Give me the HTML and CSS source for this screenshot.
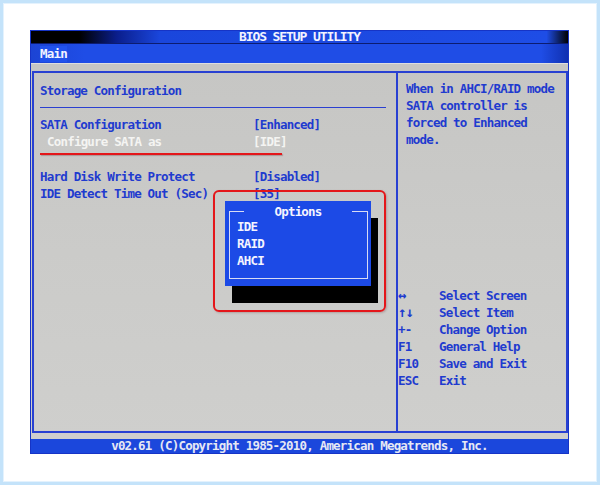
FILE: index.html
```html
<!DOCTYPE html>
<html lang="en">
<head>
<meta charset="utf-8">
<title>BIOS Setup Utility</title>
<link rel="stylesheet" href="styles.css">
</head>
<body>
<div class="frame">
  <div class="screen">
    <div class="titlebar">BIOS SETUP UTILITY</div>
    <div class="menubar"><span class="tab">Main</span></div>
    <div class="desk">
      <div class="panel">
        <div class="left">
          <div class="heading">Storage Configuration</div>
          <div class="rule"></div>
          <div class="items">
            <span class="label">SATA Configuration</span><span class="value">[Enhanced]</span>
            <span class="label sub sel">Configure SATA as</span><span class="value sel">[IDE]</span>
            <span class="label blank">&nbsp;</span><span class="value"></span>
            <span class="label">Hard Disk Write Protect</span><span class="value">[Disabled]</span>
            <span class="label">IDE Detect Time Out (Sec)</span><span class="value">[35]</span>
          </div>
          <div class="underline"></div>
          <div class="popup">
            <div class="popup-frame"></div>
            <div class="popup-title">Options</div>
            <ul class="popup-list">
              <li>IDE</li>
              <li>RAID</li>
              <li>AHCI</li>
            </ul>
          </div>
          <div class="mark"></div>
        </div>
        <div class="right">
          <div class="help">When in AHCI/RAID mode<br>SATA controller is<br>forced to Enhanced<br>mode.</div>
          <div class="keys">
            <span class="key arrow">↔</span><span>Select Screen</span>
            <span class="key arrow">↑↓</span><span>Select Item</span>
            <span class="key">+-</span><span>Change Option</span>
            <span class="key">F1</span><span>General Help</span>
            <span class="key">F10</span><span>Save and Exit</span>
            <span class="key">ESC</span><span>Exit</span>
          </div>
        </div>
      </div>
    </div>
    <div class="footer">v02.61 (C)Copyright 1985-2010, American Megatrends, Inc.</div>
  </div>
</div>
</body>
</html>
```

FILE: styles.css
```css
html, body {
  margin: 0;
  padding: 0;
  background: #ffffff;
}

body {
  width: 600px;
  height: 485px;
  overflow: hidden;
}

.frame {
  box-sizing: border-box;
  width: 600px;
  height: 485px;
  border: 3px solid #c4e3fa;
  box-shadow: inset 0 0 0 1px #e4f2fd;
  padding: 27px 28px 28px 27px;
  background: #ffffff;
}

.screen {
  box-sizing: border-box;
  width: 539px;
  height: 424px;
  border: 1px solid #1634c6;
  display: flex;
  flex-direction: column;
  font-family: "DejaVu Sans Mono", monospace;
  font-weight: bold;
  font-size: 12.5px;
  letter-spacing: -0.8px;
  color: #1f3bcf;
  background: #c9c9c7;
}

.titlebar {
  height: 12px;
  line-height: 12px;
  text-align: center;
  font-size: 13px;
  letter-spacing: -1.1px;
  color: #f2f3ff;
  background: linear-gradient(90deg, #000 0, #000 9%, #0a1e8c 16%, #1a46dc 24%, #1e4de6 96%, #000 100%);
}

.menubar {
  height: 20px;
  display: flex;
  align-items: center;
  padding-left: 9px;
  background: linear-gradient(90deg, #1c44d4 0, #1f4de6 10%, #1f4de6 95%, #1030b0 100%);
  border-top: 1px solid #0c1c70;
  box-sizing: border-box;
}

.tab {
  color: #f2f2ff;
  line-height: 16px;
  background: #2152ec;
}

.desk {
  flex: 1;
  box-sizing: border-box;
  border-top: 1px solid #dedede;
  padding: 7px 0 0 1px;
  background: linear-gradient(180deg, #c6c6c4 0, #cbcbc9 50%, #cfcfcd 100%);
}

.panel {
  box-sizing: border-box;
  height: 362px;
  border: 2px solid #2840d2;
  display: grid;
  grid-template-columns: 364px 1fr;
}

.left {
  position: relative;
  border-right: 2px solid #2840d2;
  padding: 9px 0 0 6px;
}

.heading {
  line-height: 17px;
  height: 17px;
}

.rule {
  margin-top: 8px;
  width: 346px;
  height: 1px;
  background: #2a3fd0;
}

.items {
  margin-top: 8px;
  display: grid;
  grid-template-columns: 213px auto;
  grid-auto-rows: 17.3px;
  line-height: 17.3px;
}

.sub {
  padding-left: 7px;
}

.sel {
  color: #f4f4f2;
}

.underline {
  position: absolute;
  left: 6px;
  top: 80px;
  width: 242px;
  height: 2px;
  background: #e4161a;
  box-shadow: 1px 1px 1px rgba(120, 60, 60, 0.35);
}

.popup {
  position: absolute;
  left: 191px;
  top: 128px;
  width: 146px;
  height: 85px;
  background: #1c4ae6;
  box-shadow: 7px 17px 0 #000;
  color: #f4f4ff;
}

.popup-frame {
  position: absolute;
  left: 4px;
  top: 10px;
  right: 3px;
  bottom: 7px;
  border: 1px solid #d8dcf4;
}

.popup-title {
  position: absolute;
  left: 19px;
  top: 2px;
  width: 108px;
  line-height: 17px;
  text-align: center;
  background: #1c4ae6;
}

.popup-list {
  list-style: none;
  margin: 0;
  padding: 17px 0 0 12px;
  line-height: 17px;
}

.mark {
  position: absolute;
  left: 179px;
  top: 117px;
  width: 173px;
  height: 122px;
  box-sizing: border-box;
  border: 2px solid #e4161a;
  border-radius: 6px;
  box-shadow: 1px 1px 2px rgba(120, 60, 60, 0.3);
}

.right {
  display: flex;
  flex-direction: column;
  padding: 7px 0 42px 0;
}

.help {
  padding-left: 8px;
  line-height: 17px;
}

.keys {
  margin-top: auto;
  display: grid;
  grid-template-columns: 41px auto;
  grid-auto-rows: 17px;
  line-height: 17px;
}

.arrow {
  letter-spacing: -1px;
  font-size: 14px;
  line-height: 17px;
}

.footer {
  height: 14px;
  line-height: 14px;
  text-align: center;
  color: #e6e8f4;
  background: #1b47dc;
}
```
